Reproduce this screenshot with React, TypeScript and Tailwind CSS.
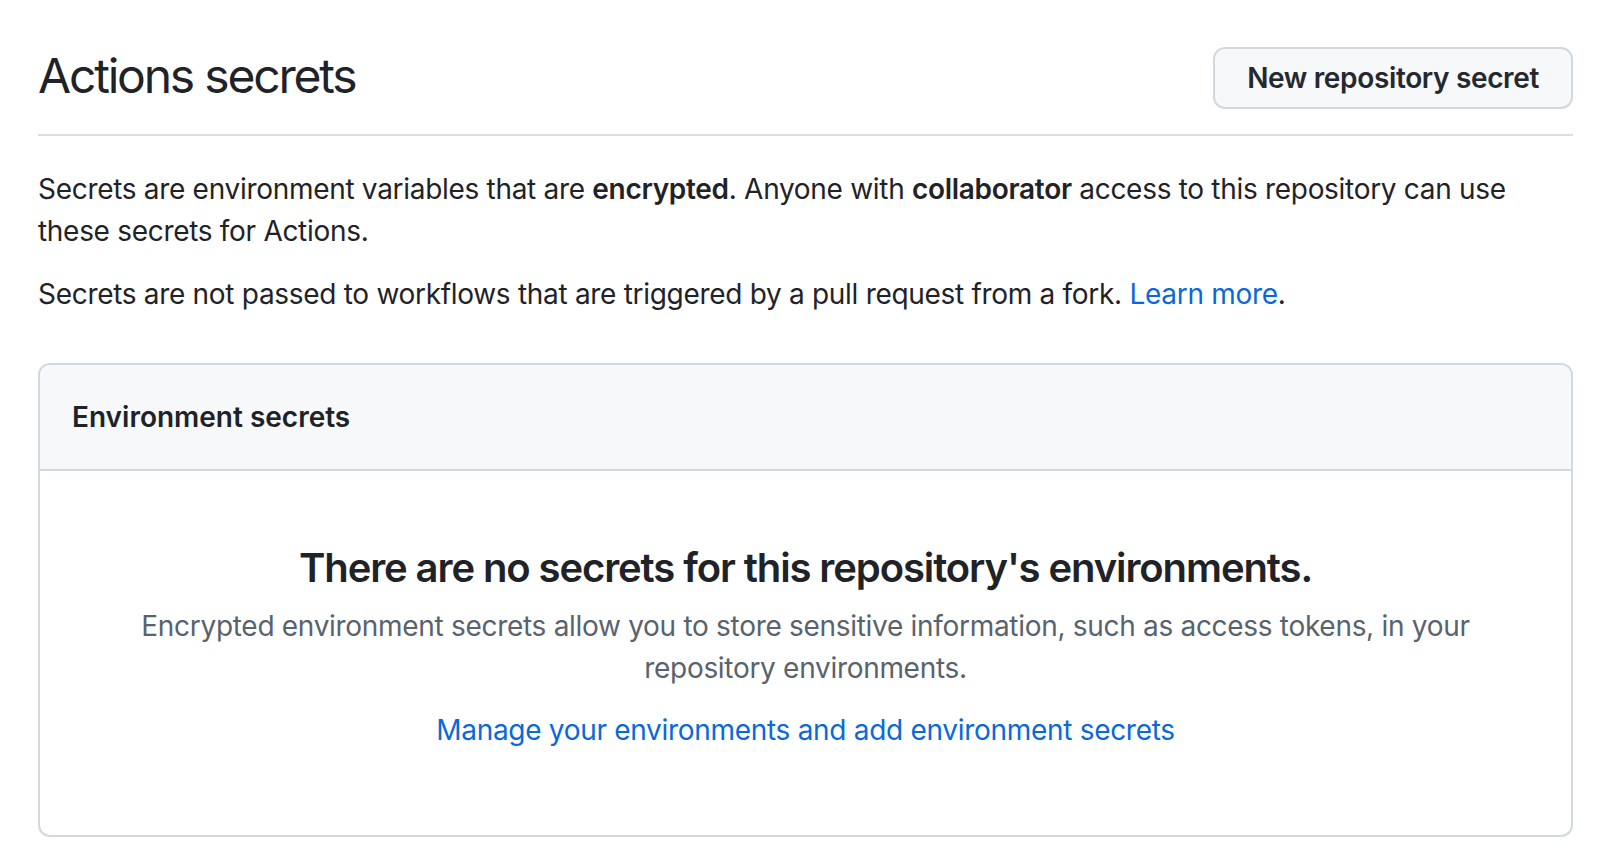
export default function App() {
  return (
    <div
      className="min-h-screen bg-white pl-[38px] pr-[47px] text-[#1f2328]"
      style={{ fontFamily: "Inter, 'Noto Sans', sans-serif" }}
    >
      <div className="flex items-center justify-between border-b-2 border-[#d8dee4] pt-[47px] pb-[25px]">
        <h2 className="-mt-[5px] text-[48px] leading-[60px] font-normal tracking-[-2.2px]">Actions secrets</h2>
        <button
          type="button"
          className="h-[62px] rounded-[12px] border-2 border-[#d1d9e0] bg-[#f6f8fa] px-[32px] text-[28px] font-semibold tracking-[-0.35px] text-[#25292e]"
        >
          New repository secret
        </button>
      </div>

      <p className="mt-[32px] text-[28px] leading-[42px] tracking-[-0.3px]">
        Secrets are environment variables that are <strong className="font-semibold">encrypted</strong>. Anyone with{" "}
        <strong className="font-semibold">collaborator</strong> access to this repository can use these secrets for
        Actions.
      </p>
      <p className="mt-[21px] text-[28px] leading-[42px] tracking-[-0.3px]">
        Secrets are not passed to workflows that are triggered by a pull request from a fork.{" "}
        <a href="#" className="text-[#0969da]">
          Learn more
        </a>
        .
      </p>

      <section className="mt-[48px] rounded-[12px] border-2 border-[#d1d9e0]">
        <div className="rounded-t-[10px] border-b-2 border-[#d1d9e0] bg-[#f6f8fa] px-[32px] py-[31px]">
          <h3 className="text-[28px] leading-[42px] font-semibold">Environment secrets</h3>
        </div>
        <div className="px-[64px] pt-[72px] pb-[84px] text-center">
          <h3 className="text-[40px] leading-[50px] font-semibold tracking-[-1.1px]">
            There are no secrets for this repository's environments.
          </h3>
          <p className="mt-[12px] text-[28px] leading-[42px] tracking-[-0.3px] text-[#59636e]">
            Encrypted environment secrets allow you to store sensitive information, such as access tokens, in your
            repository environments.
          </p>
          <a
            href="#"
            className="mt-[20px] inline-block text-[28px] leading-[42px] tracking-[-0.3px] text-[#0969da]"
          >
            Manage your environments and add environment secrets
          </a>
        </div>
      </section>
    </div>
  );
}
